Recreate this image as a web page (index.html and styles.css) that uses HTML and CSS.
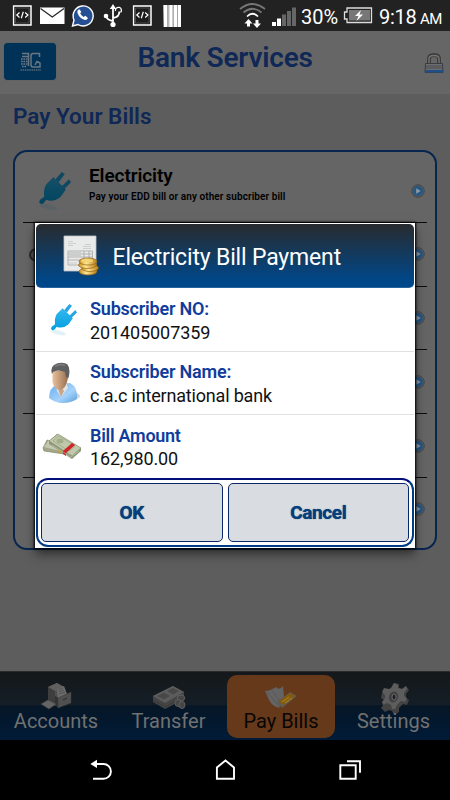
FILE: index.html
```html
<!DOCTYPE html>
<html lang="en">
<head>
<meta charset="utf-8">
<title>Bank Services</title>
<link rel="stylesheet" href="styles.css">
</head>
<body>
<svg width="0" height="0" class="defs">
  <defs>
    <linearGradient id="plugFill" x1="0" y1="0" x2="0" y2="1"><stop offset="0" stop-color="#36b8f0"/><stop offset="1" stop-color="#009fdf"/></linearGradient>
    <linearGradient id="gold" x1="0" y1="0" x2="1" y2="0"><stop offset="0" stop-color="#c58d1c"/><stop offset=".4" stop-color="#ffe795"/><stop offset="1" stop-color="#b87b16"/></linearGradient>
    <linearGradient id="shirt" x1="0" y1="0" x2="1" y2="1"><stop offset="0" stop-color="#66abed"/><stop offset=".6" stop-color="#a5d3fb"/><stop offset="1" stop-color="#5b9edb"/></linearGradient>
    <linearGradient id="skin" x1="0" y1="0" x2="1" y2="0"><stop offset="0" stop-color="#e9c09b"/><stop offset="1" stop-color="#99704f"/></linearGradient>
    <symbol id="plug" viewBox="0 0 32 40">
      <ellipse cx="10" cy="35" rx="9" ry="2.500" fill="#5ab5df" opacity=".18" transform="rotate(15 10 35)"/>
      <path d="M6 25 2 28Q0 31 3 32Q5 32.500 8 28Q15 31 22 25L27 18 15 6 8 13Q5 18 6 25Z" fill="url(#plugFill)"/>
      <path d="m17 8 6-7 3 2-6 8zm6 7 7-7 2 3-7 7z" fill="#25a5e1"/>
    </symbol>
    <symbol id="go" viewBox="0 0 14 14">
      <circle cx="7" cy="7" r="6.200" fill="#5c6064" stroke="#3d4042" stroke-width=".9"/>
      <circle cx="7" cy="7" r="4.900" fill="#255684"/>
      <path d="M5.200 4.300 9.700 7 5.200 9.700Z" fill="#8b9aa5"/>
    </symbol>
    <symbol id="code" viewBox="0 0 20 21">
      <path d="M1 1H18.500V20H1Z" fill="#1c1c1c" stroke="#fff" stroke-width="1.500"/>
      <path d="M3 3H16.500V18H3Z" fill="none" stroke="#777" stroke-width=".5"/>
      <path d="M7 7.500 4.300 10 7 12.500M12.700 7.500 15.400 10 12.700 12.500M10.800 6.800 8.800 13.200" fill="none" stroke="#fff" stroke-width="1.200"/>
    </symbol>
  </defs>
</svg>
<div class="screen">
  <div class="status">
    <svg class="status-icons" width="190" height="31" viewBox="0 0 190 31">
      <use href="#code" x="12.500" y="5" width="20" height="21"/>
      <path d="M40 7.500H64.500V24H40Z" fill="#fff"/><path d="M40.500 8.500 52.300 17 64 8.500" fill="none" stroke="#222" stroke-width="1.200"/>
      <path d="M72.500 26 74 20A10 10 0 1 1 78 24.500Z" fill="#254f92" stroke="#fff" stroke-width="1.400"/>
      <path d="M78.200 9.700Q76.800 11 77.500 13Q79.500 18.500 85 20Q87 20.300 88 18L85.300 15.800 83.500 17Q81 15.500 80.200 13.300L81.300 12 79.700 9.500Z" fill="#fff"/>
      <g fill="none" stroke="#fff" stroke-width="1.800"><path d="M113 24V7M106 15.500Q106.500 20 113 21M119.300 11.500Q119.500 17 113 18"/><path d="M115.500 11A3 3 0 1 1 120.500 12.500" stroke-width="1.300"/></g>
      <path d="M109.800 9 113 4 116.200 9Z" fill="#fff"/><circle cx="106" cy="16" r="2.300" fill="#fff"/><circle cx="113" cy="24.500" r="2.600" fill="#fff"/>
      <use href="#code" x="132.500" y="5" width="20" height="21"/>
      <path d="M163 5H181L180.500 27H163.500Z" fill="#bbb"/><path d="M165.500 5V27M171 5V27M175.500 5V27M179.500 5V27" stroke="#fff" stroke-width="3"/><path d="M167.700 5V27M173.100 5V27M177.500 5V27" stroke="#999" stroke-width=".6"/>
    </svg>
    <svg class="signal-icons" width="62" height="31" viewBox="238 0 62 31">
      <g fill="none" stroke="#777" stroke-width="1.700"><path d="M240 9Q252.500-1 265 9"/><path d="M243.500 12.500Q252.500 5 261.500 12.500"/><path d="M247 16.500Q252.500 11 258 16.500" stroke="#fff"/></g>
      <path d="M248.500 19 252.500 23.500H250V26.500H247V23.500H244.500ZM257 28 253 23.500H255.500V20H258.500V23.500H261Z" fill="#fff"/>
      <path d="M272 22H276V26H272ZM277 18.500H281V26H277Z" fill="#fff"/><path d="M282 14.500H286V26H282ZM287 11H291V26H287ZM292 7.500H296V26H292Z" fill="#666"/>
    </svg>
    <span class="percent">30%</span>
    <svg class="battery" width="30" height="17" viewBox="0 0 30 17"><path d="M4 1H28.500V15.500H4V12H1.500V5H4Z" fill="#222" stroke="#ddd" stroke-width="1.300"/><path d="M6 3H27V13.500H6Z" fill="#777"/><path d="m18 3-6 6h3.500l-2 5 6.500-6.500h-3.500z" fill="#fff"/></svg>
    <span class="clock">9:18</span><span class="ampm">AM</span>
  </div>
  <header class="header">
    <div class="logo">
      <svg width="24" height="22" viewBox="0 0 24 22"><g fill="none" stroke="#687784" stroke-width="1.500"><path d="M3 1.500H9.500V14"/><path d="M20.500 5V1.500H14Q12 1.500 12 4V13Q12 15 14 15H21V11L18 9.500 16 13"/><path d="M3 4.500H9"/><path d="M2 7H9M2 9.500H9M2 12H9M3 14.500H8" stroke-dasharray="1.700 .7"/></g><path d="M1.500 18H22" stroke="#405b70" stroke-width="1.800" stroke-dasharray="1.500 .7"/></svg>
    </div>
    <h1 class="title">Bank Services</h1>
    <svg class="lock" width="20" height="21" viewBox="0 0 20 21"><path d="M5 12V6Q5 2 10 2T15 6V12" fill="none" stroke="#3c3c3c" stroke-width="4"/><path d="M5 11V6Q5 2.500 10 2.500T15 6V11" fill="none" stroke="#747474" stroke-width="1.400"/><path d="M1.500 10.500H18.500L19 19.500H1Z" fill="#6b6d70" stroke="#353a41" stroke-width=".9"/><path d="M1.500 13H18.500M1.500 15H18.500" stroke="#414447" stroke-width=".8"/><path d="M1 17H19V19.500H1Z" fill="#204f87"/></svg>
  </header>
  <main class="content">
    <h2 class="section-title">Pay Your Bills</h2>
    <div class="bills">
      <div class="bill">
        <svg class="bill-plug" width="33" height="43"><use href="#plug"/></svg>
        <div class="bill-text"><div class="bill-name">Electricity</div><div class="bill-note">Pay your EDD bill or any other subcriber bill</div></div>
        <svg class="go" width="14" height="14"><use href="#go"/></svg>
      </div>
      <div class="bill"><svg class="phone" width="14" height="20" viewBox="0 0 14 20"><path d="M11 1Q1 2 1 8T12 15" fill="#555" stroke="#292929" stroke-width="2"/><path d="M12 5H6V10H12M7 16 12 19" stroke="#202020" stroke-width="1.500" fill="none"/></svg><svg class="go" width="14" height="14"><use href="#go"/></svg></div>
      <div class="bill"><svg class="go" width="14" height="14"><use href="#go"/></svg></div>
      <div class="bill"><svg class="go" width="14" height="14"><use href="#go"/></svg></div>
      <div class="bill"><svg class="go" width="14" height="14"><use href="#go"/></svg></div>
      <div class="bill"><svg class="go" width="14" height="14"><use href="#go"/></svg></div>
    </div>
  </main>
  <nav class="tabs">
    <div class="tab">
      <svg width="32" height="28" viewBox="0 0 32 28"><path d="M8 5 17 1 24 5V20L15 24 8 18Z" fill="#505050"/><path d="m8 5 9-4 7 4-9 4z" fill="#606060"/><path d="M8 5 15 9V24L8 18Z" fill="#3e3e3e"/><path d="m17 8 7-4 3 8-9 4z" fill="#6c6c6c"/><path d="m19 8 4-2m-4 4 5-2m-5 4 6-2" stroke="#4a4a4a" stroke-width=".8"/><path d="m18 16 13-6v11l-13 5z" fill="#505050" stroke="#3c3c3c" stroke-width=".5"/><path d="m18 16-3-2v9l3 3z" fill="#333"/><path d="m23 18 4-2" stroke="#292929"/><path d="m1 22 7-4 8 4-7 5z" fill="#646464" stroke="#444" stroke-width=".6"/></svg>
      <span class="t-accounts">Accounts</span>
    </div>
    <div class="tab">
      <svg width="34" height="28" viewBox="0 0 34 28"><path d="M1 14 21 4 32 10V17L13 27 1 20Z" fill="#444"/><path d="m1 14 20-10 11 6-19 11z" fill="#5c5c5c"/><path d="m5 14 7-3.500 6 3.500-6 3.500zm10-5 6-3 6 3-6 3.500z" fill="#484848"/><path d="M1 18 13 25 24 19" fill="none" stroke="#393939" stroke-width="1"/><g fill="#454545" stroke="#626262" stroke-width=".9"><ellipse cx="29" cy="16" rx="3.700" ry="3"/><ellipse cx="26" cy="21" rx="3" ry="3.500"/><ellipse cx="30" cy="23" rx="3" ry="3.500"/></g></svg>
      <span class="t-transfer">Transfer</span>
    </div>
    <div class="tab active">
      <svg width="34" height="28" viewBox="0 0 34 28"><path d="M1 9Q6 9 12 5Q15 9 19 4L20 14 15 26Q8 24 5 18Z" fill="#646464"/><path d="M3 10 15 24M8 8 17 21" stroke="#565656" stroke-width=".8"/><path d="m13 20 13-10 7 4-15 12z" fill="#5e5b50"/><path d="m15 19 11-8 5 3-12 9z" fill="#845a10"/><path d="m18 20 7-5m-4 6 7-5" stroke="#a07919" stroke-width="1.300"/></svg>
      <span class="t-bills">Pay Bills</span>
    </div>
    <div class="tab">
      <svg class="gear" width="30" height="32" viewBox="0 0 30 32"><path d="m12 5 2-4 5 1v4l3 1 4-3 3 4-3 4v4l3 2-2 5-4-1-4 4v4l-5 3-2-4-3-1-4 2-4-4 3-4v-4l-3-2 1-5h5z" fill="#424242"/><path d="m11 6 3-5 4 2v3l4 1 4-3 1 3-3 4v3l3 2-2 4-4-1-4 4-2 4h-3l-1-4-4-2-4 2-1-3 3-4v-3l-3-3 2-4 5 1z" fill="#5d5d5d"/><ellipse cx="13.500" cy="15" rx="4.500" ry="5.500" fill="#404040" transform="rotate(20 13.500 15)"/><ellipse cx="14" cy="15" rx="2" ry="3" fill="#18202a" stroke="#6a6a6a"/></svg>
      <span class="t-settings">Settings</span>
    </div>
  </nav>
  <div class="system">
    <svg width="276" height="24" viewBox="0 0 276 24" fill="none" stroke="#fff" stroke-width="1.900"><path d="M4 6H13.500A7.300 7.300 0 0 1 13.500 20.800H3"/><path d="M0.300 6 7 1.700V10Z" fill="#fff" stroke="none"/><path d="M126.900 20.800V9.500L135.500 2.500 144 9.500V20.800Z"/><path d="M250.300 7.200H265.700V20.800H250.300Z"/><path d="M257 3.200H270V14.800"/></svg>
  </div>

  <section class="dialog">
    <div class="dialog-head">
      <svg class="invoice" width="38" height="42" viewBox="0 0 38 42"><path d="M1 1H33V36H1Z" fill="#e9eaea" stroke="#bec4c8" stroke-width=".8"/><path d="M5 6.500h5m-5 2h8m-8 2h5m12-1h6m-8 2h8m-8 2h8" stroke="#ccc" stroke-width=".9"/><path d="M5 16H29.500V30H5ZM5 19H29M5 22H29M5 25H29M21 16V25M26 16V25" fill="none" stroke="#a5a5a5" stroke-width=".8"/><path d="M6 17.500h12M6 20.500h12M6 28h8" stroke="#ccc"/><g fill="url(#gold)" stroke="#95610c" stroke-width=".7"><ellipse cx="25" cy="36.500" rx="9" ry="3.500"/><ellipse cx="27" cy="33" rx="8.500" ry="3.500"/><ellipse cx="24.500" cy="30" rx="9" ry="3.500"/><ellipse cx="25" cy="26.500" rx="9" ry="3.500"/></g><ellipse cx="24" cy="25.800" rx="6" ry="1.700" fill="#f5d474"/></svg>
      <h3>Electricity Bill Payment</h3>
    </div>
    <div class="field">
      <div class="icon"><svg class="plug-small" width="27" height="34"><use href="#plug"/></svg></div>
      <div><div class="label l1">Subscriber NO:</div><div class="value v1">201405007359</div></div>
    </div>
    <div class="field">
      <div class="icon"><svg class="person" width="34" height="42" viewBox="0 0 34 42"><ellipse cx="23" cy="34" rx="9" ry="4" fill="#bbb" opacity=".6"/><path d="M1 36Q1 26 9 22L22 21Q30 25 29 37Q23 41 15 41T1 36Z" fill="url(#shirt)"/><path d="M8 22 18 20 20 26 13 35 9 29Z" fill="#dfe3e6"/><path d="m10 27 4-1 2 3-3 6z" fill="#c9a68a"/><path d="M4.500 9 19 8 20 16Q18 27 12 28Q6 27 4.500 20Z" fill="url(#skin)"/><path d="M4 12Q2 6 6 3Q12-1 19 2Q23 6 20.500 16L18 15 17 10Q10 7 5 10Z" fill="#5e5f60"/><path d="M7 4.500Q12 1 17 3.500" stroke="#7c7e80" stroke-width="1.500" fill="none"/></svg></div>
      <div><div class="label l2">Subscriber Name:</div><div class="value v2">c.a.c international bank</div></div>
    </div>
    <div class="field last">
      <div class="icon"><svg class="money" width="40" height="28" viewBox="0 0 40 28"><path d="m1 15 4-8 24 6-7 8-20-3z" fill="#a2a787" stroke="#787e63" stroke-width=".6"/><path d="m2 14 5-7 21 5-6 7z" fill="#c3c9ac"/><path d="M7 8 15 1 39 15V18L30 26 7 11Z" fill="#8f9679"/><path d="m7 8 9-7 23 14-9 8z" fill="#c0c9aa" stroke="#818a6c" stroke-width=".6"/><path d="m11 8 6-5 16 10-6 5z" fill="none" stroke="#98a381" stroke-width=".7"/><ellipse cx="18" cy="8" rx="3.500" ry="2.500" fill="#a3ad8b"/><path d="m15 17 5 1-2 2z" fill="#e19b25"/><path d="m21 18 9-8 3 2-9 8v3l-3-2z" fill="#cf2529"/><path d="M10 12 29 24 37 18" stroke="#c5c9b1" stroke-width=".6" fill="none"/></svg></div>
      <div><div class="label l3">Bill Amount</div><div class="value v3">162,980.00</div></div>
    </div>
    <div class="actions"><button class="ok">OK</button><button class="cancel">Cancel</button></div>
  </section>
</div>
</body>
</html>
```
FILE: styles.css
```css
* { box-sizing: border-box; }
body { margin: 0; font-family: Roboto, "Liberation Sans", sans-serif; background: #000; }
svg { display: block; flex: none; }
.defs { position: absolute; }
h1, h2, h3 { margin: 0; }
.screen { position: relative; width: 450px; height: 800px; display: flex; flex-direction: column; overflow: hidden; white-space: nowrap; }

.status { height: 31px; flex: none; display: flex; background: #222; color: #fff; line-height: 24px; }
.signal-icons { margin-left: 48px; }
.percent { width: 56px; padding: 5px 0 0 1px; font-size: 20px; }
.battery { margin: 7px 5px 0 -13px; }
.clock { width: 42px; padding: 5px 0 0 1px; font-size: 20px; letter-spacing: -.3px; }
.ampm { padding-top: 7px; font-size: 15px; letter-spacing: -.5px; }

.header { height: 63px; flex: none; display: flex; background: #666; }
.logo { width: 52px; height: 37px; margin: 12px 0 0 4px; display: flex; justify-content: center; padding: 9px 0 0 1px; border-radius: 4px; background: #003157; box-shadow: 0 0 1px #28455b; }
.title { width: 286.500px; margin: 10px 0 0 81.500px; font-size: 28px; line-height: 34px; letter-spacing: -.22px; font-weight: 600; color: #0f2856; }
.lock { margin-top: 22px; }

.content { height: 577px; flex: none; padding: 9px 13px 0; background: #5d5d5d; }
.section-title { height: 47px; font-size: 22.500px; line-height: 26px; font-weight: 600; color: #0f2856; }
.bills { width: 424px; height: 400px; padding: 7px 8px; border: 2px solid #062650; border-radius: 14px; background: #656565; }
.bill { height: 63.8px; display: flex; border-bottom: 1.500px solid #0c0c0c; }
.bill:last-child { border-bottom: 0; }
.bill-plug { margin: 11px 17px 0 15px; filter: brightness(.43); }
.bill-text { width: 300px; margin-left: 1px; }
.bill-name { padding-top: 4.500px; font-size: 19px; line-height: 23px; letter-spacing: -.1px; font-weight: 600; color: #000; }
.bill-note { margin-top: 4px; font-size: 10px; line-height: 12px; letter-spacing: .08px; font-weight: 600; color: #000; }
.go { margin: 24.500px 2px 0 auto; }
.phone { margin: 24px 0 0 6px; }

.tabs { height: 69px; flex: none; display: flex; padding: 3px 2px 3px; border-top: 1px solid #292b2d; background: linear-gradient(#15181a 0, #141e26 48%, #061626 50%, #001b38 100%); color: #717171; font-size: 20px; }
.tab { width: 108px; height: 63px; margin-right: 4.500px; border-radius: 10px; display: flex; flex-direction: column; align-items: center; padding-top: 7px; line-height: 24px; }
.tab:last-child { margin-right: 0; }
.tab span { margin-top: -1px; }
.active { background: #66391b; color: #080604; }
.gear { margin: 0 0 -4px 3px; }
.system { height: 60px; flex: none; display: flex; background: #000; padding: 18px 0 0 90px; }

.dialog { position: absolute; left: 35px; top: 223px; width: 380px; height: 325px; padding: 1px; background: #fff; box-shadow: 0 0 2px 1px #000, 0 6px 10px rgba(0,0,0,.5); }
.dialog-head { height: 64px; border-radius: 5px; display: flex; background: linear-gradient(#282b2e, #004789 90%); border-bottom: 1px solid #2763a3; color: #fff; }
.invoice { margin: 11px 11px 0 26.500px; }
.dialog-head h3 { margin: 20px 0 0 1px; font-size: 23px; line-height: 28px; letter-spacing: -.17px; font-weight: 400; }
.field { height: 63.500px; display: flex; border-bottom: 1px solid #e1e1e1; }
.field.last { height: 62.500px; border-bottom: 0; }
.icon { width: 54px; flex: none; }
.plug-small { margin: 15px 0 0 14px; }
.person { margin: 10px 0 0 12px; }
.money { margin: 18px 0 0 6px; }
.label { padding-top: 9.500px; font-size: 18px; line-height: 22px; letter-spacing: -.2px; font-weight: 600; color: #103d9b; }
.value { margin-top: 1.500px; font-size: 18px; line-height: 22px; letter-spacing: -.18px; color: #111; }
.v1 { margin-top: 2px; letter-spacing: -.1px; }
.v3 { letter-spacing: -.12px; }
.l3 { letter-spacing: -.28px; }
.actions { height: 69px; display: flex; gap: 5px; padding: 3px; border: 2px solid #003b85; border-top-color: #000f7b; border-radius: 12px; }
.actions button { flex: 1; margin: 0; padding: 2px 0 0; border: 1.500px solid #0b2768; border-radius: 5px; background: #d9dde1; color: #043f7d; font: 700 19px/24px Roboto, "Liberation Sans", sans-serif; letter-spacing: -.4px; text-shadow: 0 0 1px #173b63; }
```
